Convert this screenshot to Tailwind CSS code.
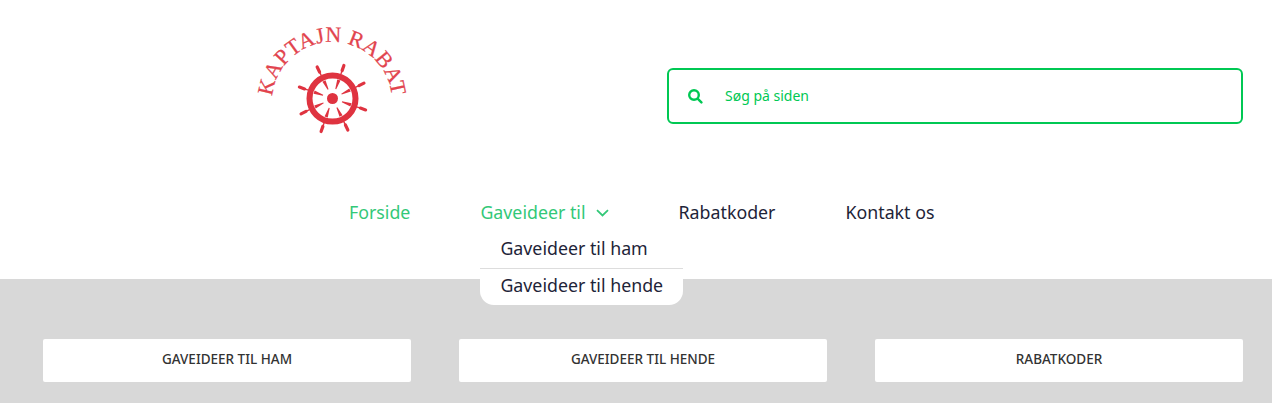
<!DOCTYPE html>
<html lang="en">
<head>
  <meta charset="UTF-8">
  <meta name="viewport" content="width=device-width, initial-scale=1.0">
  <title>Kaptajn Rabat</title>
  <script src="https://cdn.jsdelivr.net/npm/@tailwindcss/browser@4"></script>
</head>
<body class="bg-white font-['Noto_Sans',sans-serif] h-[403px] overflow-hidden">
  <header class="h-[279px] bg-white">
    <div class="flex items-start">
      <!-- logo -->
      <a href="#" class="ml-[240px] mt-[10px] block w-[180px] h-[140px]">
        <svg width="180" height="140" viewBox="240 10 180 140">
          <defs><path id="logoArc" d="M275.6 122.5 A60 60 0 1 1 388.4 122.5" /></defs>
          <text font-family="Liberation Serif, serif" font-size="22" fill="#e2444e" stroke="#e2444e" stroke-width="0.25" text-anchor="middle" letter-spacing="0.2">
            <textPath href="#logoArc" startOffset="50%">KAPTAJN RABAT</textPath>
          </text>
          <g fill="none" stroke="#df3340">
            <circle cx="332.5" cy="98.5" r="23" stroke-width="6" />
            <circle cx="332.5" cy="98.5" r="5.5" fill="#df3340" stroke="none" />
            <g fill="#df3340" stroke="none">
              <path d="M332 88.5L330.8 79H334.2L333 88.5Z" transform="rotate(19 332.5 98.5)" />
              <path d="M332 88.5L330.8 79H334.2L333 88.5Z" transform="rotate(64 332.5 98.5)" />
              <path d="M332 88.5L330.8 79H334.2L333 88.5Z" transform="rotate(109 332.5 98.5)" />
              <path d="M332 88.5L330.8 79H334.2L333 88.5Z" transform="rotate(154 332.5 98.5)" />
              <path d="M332 88.5L330.8 79H334.2L333 88.5Z" transform="rotate(199 332.5 98.5)" />
              <path d="M332 88.5L330.8 79H334.2L333 88.5Z" transform="rotate(244 332.5 98.5)" />
              <path d="M332 88.5L330.8 79H334.2L333 88.5Z" transform="rotate(289 332.5 98.5)" />
              <path d="M332 88.5L330.8 79H334.2L333 88.5Z" transform="rotate(334 332.5 98.5)" />
            </g>
            <g stroke-width="1.4">
              <path d="M332.5 73V68" transform="rotate(19 332.5 98.5)" />
              <path d="M332.5 73V68" transform="rotate(64 332.5 98.5)" />
              <path d="M332.5 73V68" transform="rotate(109 332.5 98.5)" />
              <path d="M332.5 73V68" transform="rotate(154 332.5 98.5)" />
              <path d="M332.5 73V68" transform="rotate(199 332.5 98.5)" />
              <path d="M332.5 73V68" transform="rotate(244 332.5 98.5)" />
              <path d="M332.5 73V68" transform="rotate(289 332.5 98.5)" />
              <path d="M332.5 73V68" transform="rotate(334 332.5 98.5)" />
            </g>
            <g stroke-width="3.2" stroke-linecap="round">
              <path d="M332.5 69V63.5" transform="rotate(19 332.5 98.5)" />
              <path d="M332.5 69V63.5" transform="rotate(64 332.5 98.5)" />
              <path d="M332.5 69V63.5" transform="rotate(109 332.5 98.5)" />
              <path d="M332.5 69V63.5" transform="rotate(154 332.5 98.5)" />
              <path d="M332.5 69V63.5" transform="rotate(199 332.5 98.5)" />
              <path d="M332.5 69V63.5" transform="rotate(244 332.5 98.5)" />
              <path d="M332.5 69V63.5" transform="rotate(289 332.5 98.5)" />
              <path d="M332.5 69V63.5" transform="rotate(334 332.5 98.5)" />
            </g>
          </g>
        </svg>
      </a>
      <!-- search -->
      <div class="ml-[247px] mt-[68px] w-[576px] h-[56px] border-2 border-[#00c853] rounded-[6px] flex items-center pl-[18px] text-[#00c853]">
        <svg width="16" height="16" viewBox="0 0 16 16" fill="none" stroke="currentColor" stroke-width="2.4" stroke-linecap="round">
          <circle cx="7" cy="7" r="4.8" />
          <path d="M10.6 10.6L14.4 14.4" />
        </svg>
        <span class="ml-[22px] text-[14px] leading-[20px]">Søg på siden</span>
      </div>
    </div>
    <!-- nav -->
    <nav class="mt-[47px] ml-[349px] flex gap-[70px] text-[17.8px] leading-[30px] text-[#1e2438]">
      <a href="#" class="text-[#33c878]">Forside</a>
      <div class="relative">
        <a href="#" class="flex items-center text-[#33c878]">
          Gaveideer til
          <svg class="ml-[10px] mt-[2px]" width="13" height="8" viewBox="0 0 13 8" fill="none" stroke="currentColor" stroke-width="1.8"><path d="M1 1.2l5.5 5.3L12 1.2" /></svg>
        </a>
        <div class="absolute z-10 left-0 top-[31px] w-[203px] bg-white rounded-b-[14px]">
          <a href="#" class="flex items-center h-[41px] px-5 border-b border-[#dddddd] whitespace-nowrap">Gaveideer til ham</a>
          <a href="#" class="flex items-center h-[36px] pb-[4px] px-5 whitespace-nowrap">Gaveideer til hende</a>
        </div>
      </div>
      <a href="#">Rabatkoder</a>
      <a href="#">Kontakt os</a>
    </nav>
  </header>
  <main class="h-[124px] bg-[#d8d8d8] pt-[60px] pl-[43px] pr-[29px]">
    <div class="grid grid-cols-3 gap-[48px]">
      <a href="#" class="h-[43px] pb-[2px] bg-white rounded-[2px] flex items-center justify-center text-[13.5px] font-medium text-[#333333]">GAVEIDEER TIL HAM</a>
      <a href="#" class="h-[43px] pb-[2px] bg-white rounded-[2px] flex items-center justify-center text-[13.5px] font-medium text-[#333333]">GAVEIDEER TIL HENDE</a>
      <a href="#" class="h-[43px] pb-[2px] bg-white rounded-[2px] flex items-center justify-center text-[13.5px] font-medium text-[#333333]">RABATKODER</a>
    </div>
  </main>
</body>
</html>
